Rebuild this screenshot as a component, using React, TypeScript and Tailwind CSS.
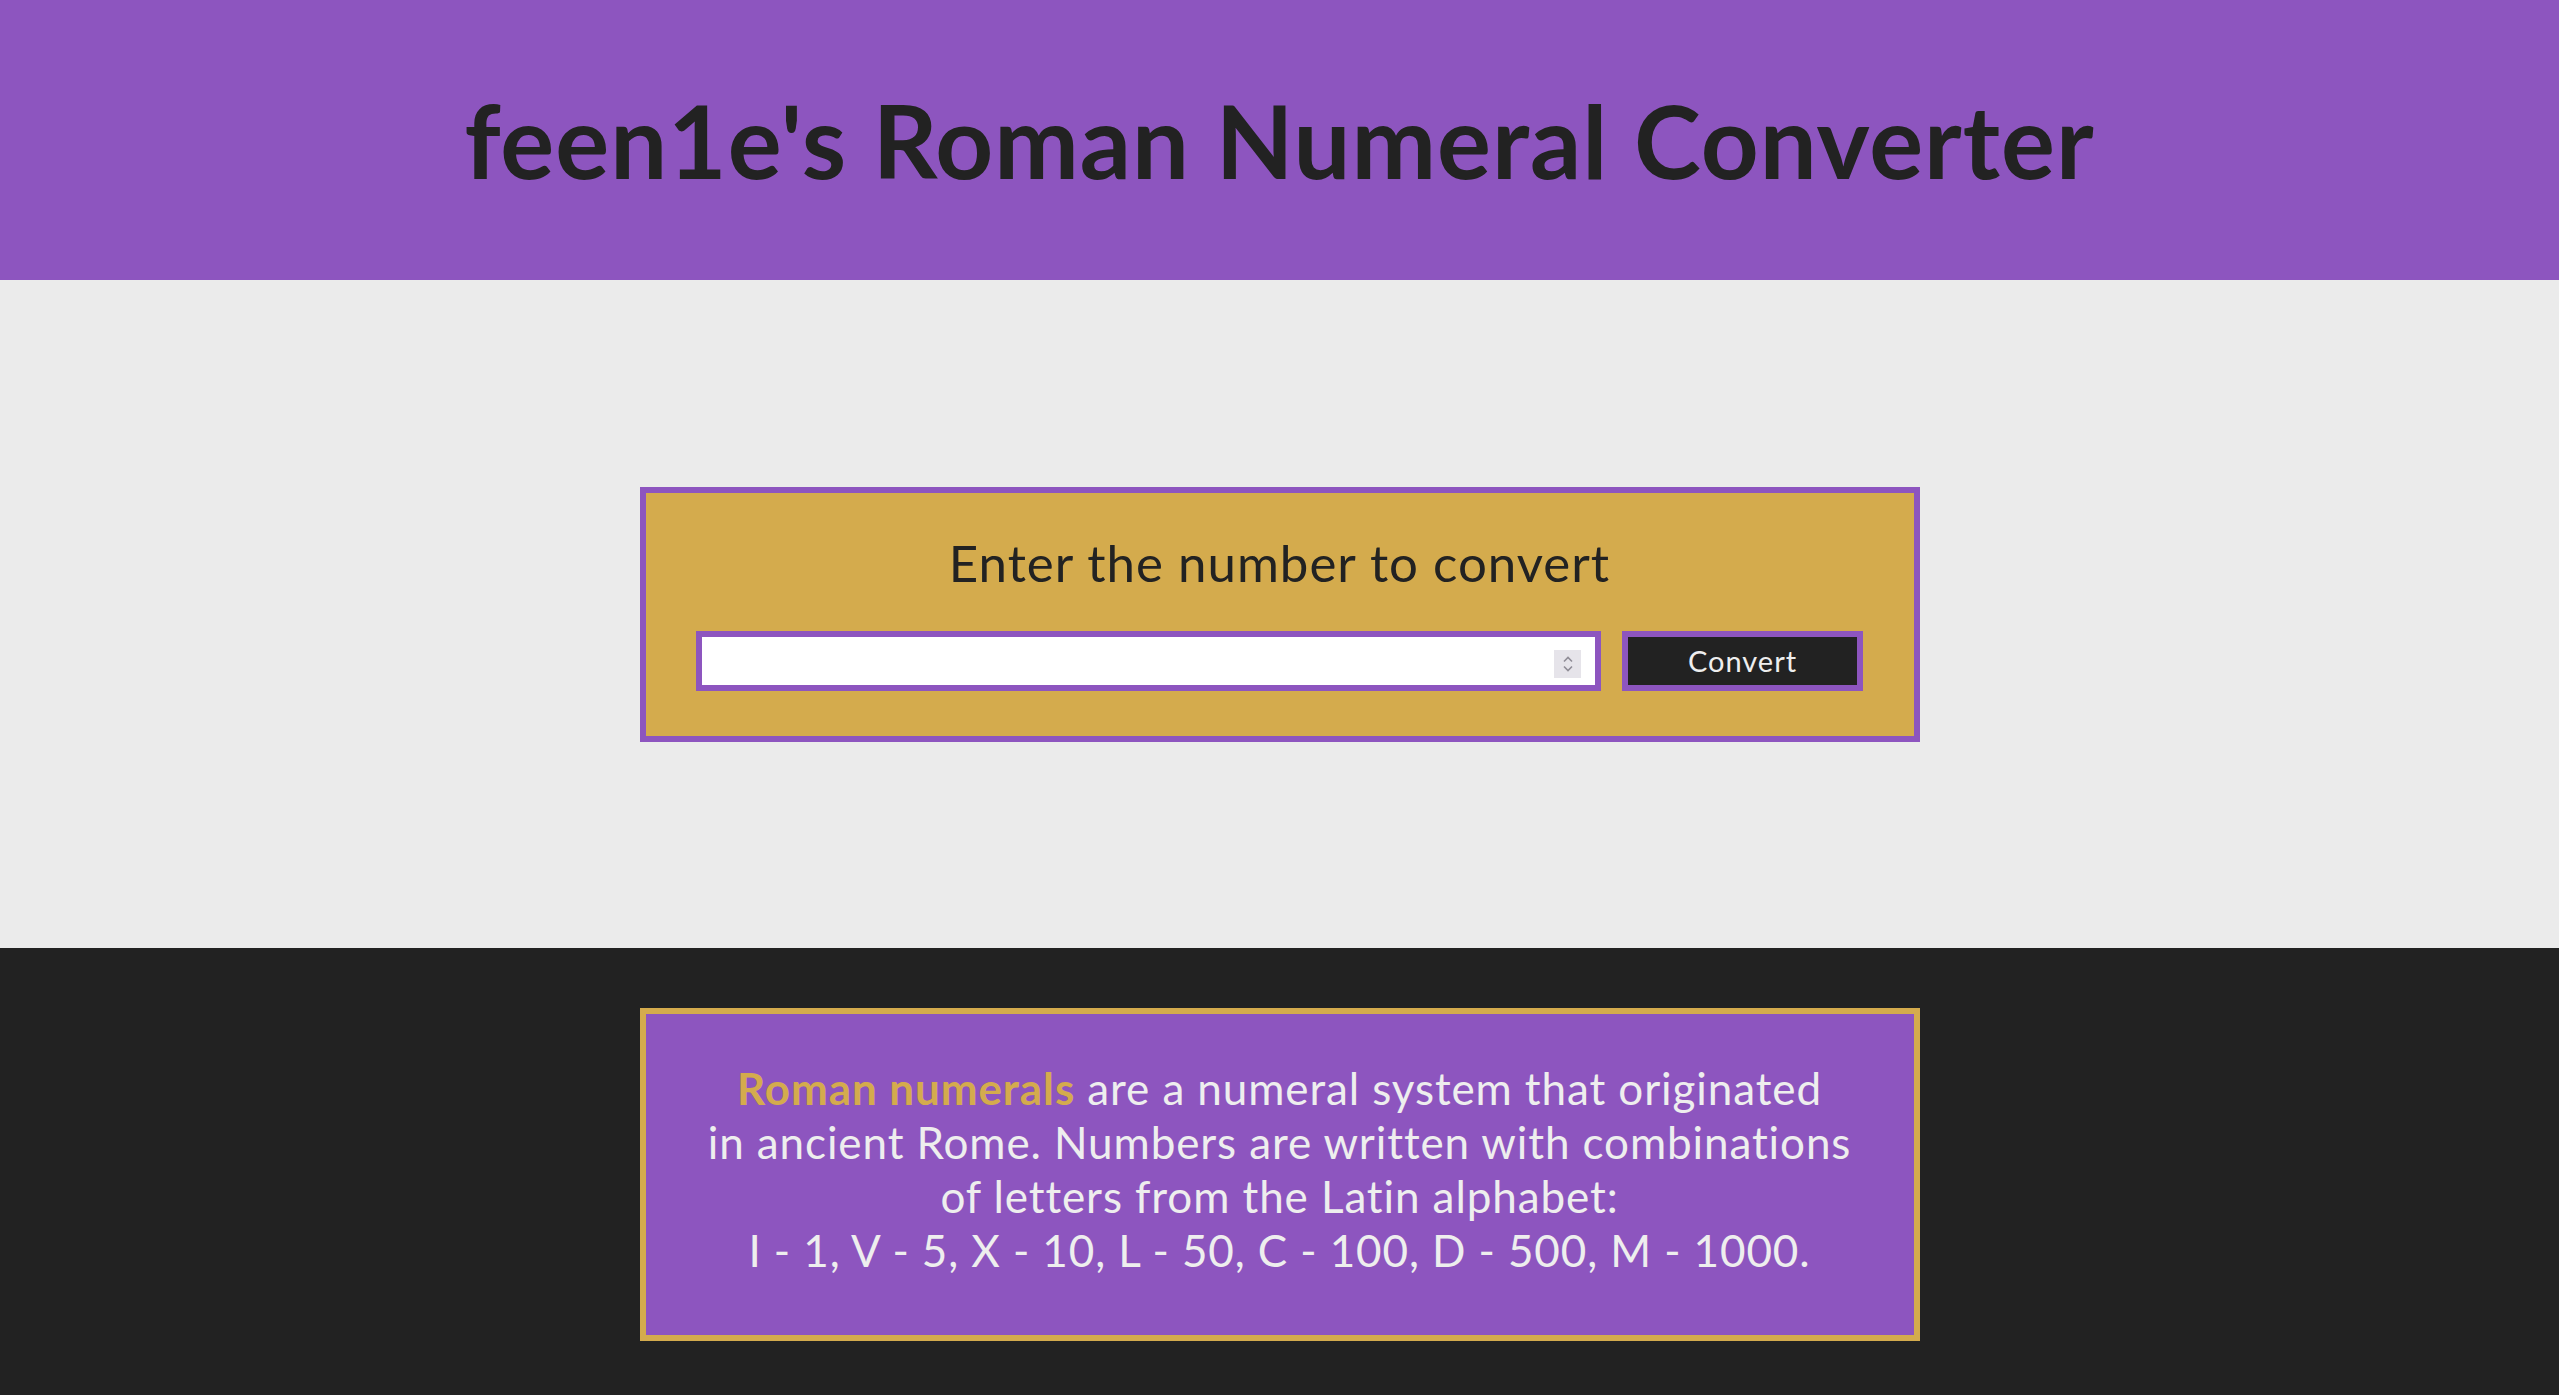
import React from "react";

const Spinner = () => (
  <div className="absolute right-[20px] top-[19px] w-[27px] h-[28px] bg-[#e6e4ea] flex items-center justify-center pointer-events-none">
    <svg width="14" height="20" viewBox="0 0 14 20" fill="none" stroke="#8f8c96" strokeWidth="1.6">
      <path d="M3 7.5 L7 3.5 L11 7.5" />
      <path d="M3 12.5 L7 16.5 L11 12.5" />
    </svg>
  </div>
);

const App = () => {
  return (
    <div className="min-h-screen flex flex-col font-['Lato',_'Noto_Sans',_sans-serif] text-[#222222]">
      <header className="h-[280px] bg-[#8d55bf] flex items-center justify-center">
        <h1 className="text-[101px] leading-none font-bold tracking-[1px]">feen1e's Roman Numeral Converter</h1>
      </header>

      <main className="h-[668px] bg-[#ebebeb] flex items-center justify-center">
        <div className="w-[1280px] h-[255px] border-[6px] border-[#8d55bf] bg-[#d4ab4d] flex flex-col items-center pt-[44px]">
          <h2 className="text-[51px] leading-none tracking-[1px]">Enter the number to convert</h2>
          <form className="flex gap-[21px] mt-[43px]" onSubmit={(e) => e.preventDefault()}>
            <div className="relative">
              <input
                type="number"
                className="w-[905px] h-[60px] border-[6px] border-[#8d55bf] bg-white px-3 pr-[50px] text-[24px] outline-none appearance-none [&::-webkit-inner-spin-button]:appearance-none [&::-webkit-outer-spin-button]:appearance-none"
              />
              <Spinner />
            </div>
            <button
              type="submit"
              className="w-[241px] h-[60px] border-[6px] border-[#8d55bf] bg-[#222222] text-[#eeeeee] text-[29px] leading-none tracking-[1px]"
            >
              Convert
            </button>
          </form>
        </div>
      </main>

      <footer className="flex-1 bg-[#222222] flex justify-center pt-[60px] pb-[54px]">
        <div className="w-[1280px] border-[6px] border-[#d4ab4d] bg-[#8d55bf] pt-[47px] pb-[58px] text-center text-[44px] leading-[54px] text-[#eeeeee] tracking-[0.9px]">
          <span className="text-[#d4ab4d] font-bold">Roman numerals</span> are a numeral system that originated
          <br />
          in ancient Rome. Numbers are written with combinations
          <br />
          of letters from the Latin alphabet:
          <br />
          I - 1, V - 5, X - 10, L - 50, C - 100, D - 500, M - 1000.
        </div>
      </footer>
    </div>
  );
};

export default App;
